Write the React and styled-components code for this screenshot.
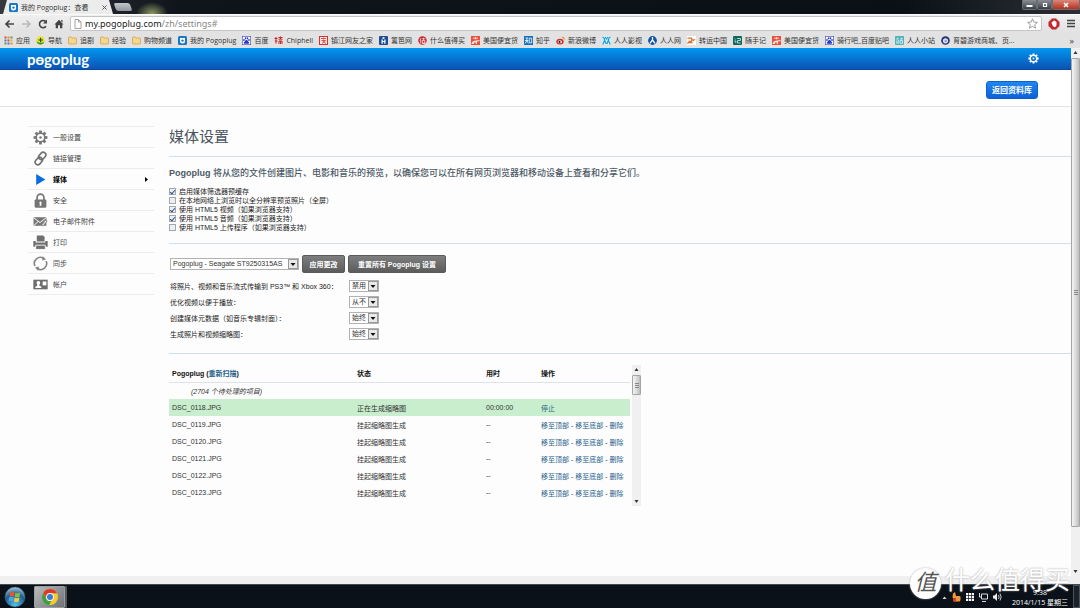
import React, { useState } from "react";
import styled, { createGlobalStyle } from "styled-components";

const GlobalStyle = createGlobalStyle`
  * {
    box-sizing: border-box;
  }
  body {
    margin: 0;
    overflow: hidden;
    font-family: "Liberation Sans", "Noto Sans CJK SC", sans-serif;
    font-size: 7px;
    color: #333;
    background: #fff;
  }
  button, input, select {
    font-family: inherit;
    margin: 0;
  }
  a {
    text-decoration: none;
  }
  svg {
    display: block;
    flex-shrink: 0;
  }
`;

const Screen = styled.div`
  display: flex;
  flex-direction: column;
  height: 100vh;
`;

/* ---------- browser ---------- */

const TitleBar = styled.header`
  display: flex;
  justify-content: space-between;
  height: 14px;
  flex-shrink: 0;
  background: radial-gradient(ellipse 16px 12px at 152px 14px, #8f9a62, transparent),
    linear-gradient(90deg, #35383c 0, #10151c 180px, #0b1017 900px, #2b2f35);
`;

const TabStrip = styled.div`
  display: flex;
  align-items: flex-end;
  padding-left: 3px;
`;

const Tab = styled.div`
  display: flex;
  align-items: center;
  gap: 3px;
  width: 110px;
  height: 14px;
  padding: 0 6px;
  font-family: "Open Sans", "Noto Sans CJK SC", sans-serif;
  color: #333;
  background: #ececec;
  clip-path: polygon(4px 0, 106px 0, 100% 100%, 0 100%);

  span {
    flex: 1;
    white-space: nowrap;
  }
`;

const NewTab = styled.button`
  width: 16px;
  height: 8px;
  margin: 0 0 3px 2px;
  padding: 0;
  border: 0;
  border-radius: 2px;
  background: linear-gradient(#c3c7cb, #8f959c);
  transform: skewX(20deg);
`;

const WindowButtons = styled.div`
  display: flex;
  align-items: flex-start;
`;

const WindowButton = styled.button`
  display: flex;
  align-items: center;
  justify-content: center;
  width: ${(p) => (p.$close ? "28px" : "15px")};
  height: 10px;
  padding: 0;
  border: 1px solid #6b6f74;
  border-top: 0;
  border-radius: 0 0 2px 2px;
  background: ${(p) =>
    p.$close
      ? "linear-gradient(#d9877a, #b8301c)"
      : "linear-gradient(#8b8f95, #3a3f46)"};
`;

const Toolbar = styled.div`
  display: flex;
  align-items: center;
  gap: 6px;
  height: 18px;
  flex-shrink: 0;
  padding: 0 4px;
  border-top: 1px solid #fafafa;
  background: linear-gradient(#efefef, #e2e2e2);
`;

const IconButton = styled.button`
  display: flex;
  padding: 0;
  border: 0;
  background: none;
`;

const AddressBar = styled.div`
  display: flex;
  align-items: center;
  flex: 1;
  gap: 3px;
  height: 15px;
  padding: 0 3px;
  border: 1px solid #c4c4c4;
  border-radius: 2px;
  background: #fff;
  font-family: "Noto Sans", "Open Sans", sans-serif;
  font-size: 9px;
  color: #222;

  p {
    flex: 1;
    margin: 0;
  }
  span {
    color: #888;
  }
`;

const Bookmarks = styled.nav`
  display: flex;
  align-items: center;
  gap: 6px;
  height: 16px;
  flex-shrink: 0;
  padding: 0 6px 0 4px;
  background: #e2e2e2;
  font-family: "Open Sans", "Noto Sans CJK SC", sans-serif;
`;

const Bookmark = styled.a`
  display: flex;
  align-items: center;
  gap: 3px;
  color: #333;
  white-space: nowrap;
`;

const MoreBookmarks = styled.button`
  margin-left: auto;
  padding: 0;
  border: 0;
  background: none;
  font-size: 9px;
  color: #444;
`;

/* ---------- scroll bars ---------- */

const Scroll = styled.div`
  display: flex;
  flex-direction: column;
  align-items: center;
  width: 9px;
  flex-shrink: 0;
  background: #f0f0f0;
  padding: 3px 0;
  gap: 4px;
`;

const Track = styled.div`
  flex: 1;
  align-self: stretch;
`;

const Thumb = styled.div`
  display: flex;
  align-items: center;
  justify-content: center;
  height: ${(p) => p.$size};
  border: 1px solid #a5a5a5;
  border-radius: 1px;
  background: linear-gradient(90deg, #f4f4f4, #dcdcdc 50%, #bdbdbd);
`;

/* ---------- page ---------- */

const Viewport = styled.div`
  display: flex;
  flex: 1;
  min-height: 0;
`;

const Page = styled.div`
  display: flex;
  flex-direction: column;
  flex: 1;
  background: #fdfdfd;
`;

const Brand = styled.div`
  display: flex;
  align-items: center;
  justify-content: space-between;
  height: 22px;
  padding: 0 32px 0 27px;
  border-bottom: 1px solid #0a4a9c;
  background: linear-gradient(#0296f0, #0b53b4);
`;

const Logo = styled.a`
  position: relative;
  display: block;
  color: #fff;
  font-family: Lato, sans-serif;
  font-weight: 700;
  font-size: 15px;
  line-height: 20px;
`;

const LogoMark = styled.svg`
  position: absolute;
  left: 11px;
  top: 10px;
`;

const ActionBar = styled.div`
  display: flex;
  align-items: center;
  justify-content: flex-end;
  height: 37px;
  padding: 0 33px;
  border-bottom: 1px solid #e4e4e4;
  background: #fff;
`;

const BlueButton = styled.button`
  height: 18px;
  width: 52px;
  margin-top: 3px;
  padding: 0;
  border: 1px solid #0b62cf;
  border-radius: 3px;
  background: linear-gradient(#2086ee, #0c62d6);
  color: #fff;
  font-weight: 700;
  font-size: 8px;
`;

const Columns = styled.div`
  display: flex;
  flex: 1;
  gap: 15px;
  padding: 19px 0 0 28px;
`;

const Menu = styled.nav`
  width: 126px;
  flex-shrink: 0;
  border-top: 1px solid #ececec;
`;

const MenuItem = styled.a`
  display: flex;
  align-items: center;
  gap: 5px;
  height: 21px;
  padding: 0 6px 0 5px;
  border-bottom: 1px solid #ececec;
  color: ${(p) => (p.$active ? "#000" : "#444")};
  font-weight: ${(p) => (p.$active ? 700 : 400)};

  span {
    flex: 1;
  }
`;

const Main = styled.main`
  flex: 1;
  min-width: 0;
`;

const Title = styled.h1`
  margin: 1px 0 9px;
  font-weight: 400;
  font-size: 15px;
  line-height: 20px;
  color: #4a5560;
`;

const Section = styled.section`
  padding: 11px 0;
  border-top: 1px solid #cfdfec;
`;

const Intro = styled.p`
  margin: 0 0 8px;
  font-size: 9px;
  line-height: 11px;
  font-weight: 500;
  color: #4c5966;

  b {
    font-weight: 700;
  }
`;

const CheckRow = styled.label`
  display: flex;
  align-items: center;
  gap: 3px;
  height: 9px;
  line-height: 9px;
  color: #222;
`;

const CheckBox = styled.input`
  appearance: none;
  width: 7px;
  height: 7px;
  border: 1px solid #a3a8ae;
  background: #eceff2;

  &:checked::after {
    content: "";
    display: block;
    width: 2px;
    height: 4px;
    margin: 0 0 0 1px;
    border: solid #2f4f8f;
    border-width: 0 1px 1px 0;
    transform: rotate(40deg);
  }
`;

const Controls = styled.div`
  display: flex;
  align-items: center;
  gap: 3px;
  margin-bottom: 5px;
  padding-left: 1px;
`;

const SelectBox = styled.div`
  position: relative;
  width: ${(p) => p.$width};
  height: 12px;
`;

const Select = styled.select`
  appearance: none;
  display: block;
  width: 100%;
  height: 12px;
  padding: 0 0 0 2px;
  border: 1px solid #b2b2b2;
  border-radius: 0;
  background: #fff;
  color: #333;
  font-size: 7px;
  line-height: 10px;
`;

const SelectArrow = styled.svg`
  position: absolute;
  right: 1px;
  top: 1px;
  pointer-events: none;
`;

const GreyButton = styled.button`
  height: 18px;
  width: ${(p) => p.$width};
  padding: 0;
  border: 1px solid #5a5a5a;
  border-radius: 2px;
  background: linear-gradient(#7e7e7e, #5c5c5c);
  color: #fff;
  font-weight: 700;
  font-size: 7px;
  white-space: nowrap;
`;

const OptionRow = styled.div`
  display: grid;
  grid-template-columns: 179px 30px;
  align-items: center;
  height: 16px;
  padding-left: 1px;
  color: #222;
`;

const QueueBox = styled.div`
  display: flex;
  gap: 2px;
  width: 472px;
  height: 141px;
`;

const Queue = styled.table`
  flex: 1;
  align-self: flex-start;
  table-layout: fixed;
  border-collapse: collapse;

  th,
  td {
    height: 17px;
    padding: 0 0 0 3px;
    text-align: left;
    white-space: nowrap;
    color: #333;
  }
  th {
    border-bottom: 1px solid #dde3e8;
    color: #111;
  }
  th:nth-child(1) {
    width: 185px;
  }
  th:nth-child(2) {
    width: 129px;
  }
  th:nth-child(3) {
    width: 55px;
  }
  a {
    color: #1d5f8c;
  }
`;

const QueueRow = styled.tr`
  background: ${(p) => (p.$running ? "#c8eecd" : "none")};
`;

const PendingCell = styled.td`
  && {
    padding-left: 22px;
    font-style: italic;
  }
`;

const BottomEdge = styled.div`
  height: 8px;
  flex-shrink: 0;
  background: #f0f0f0;
`;

/* ---------- desktop ---------- */

const Taskbar = styled.footer`
  position: relative;
  display: flex;
  align-items: stretch;
  height: 24px;
  flex-shrink: 0;
  padding-left: 4px;
  border-top: 1px solid #444b50;
  background: #0b1118;
  color: #fff;
`;

const StartButton = styled.button`
  display: flex;
  align-items: center;
  margin-right: 8px;
  padding: 0;
  border: 0;
  background: none;
`;

const TaskButton = styled.button`
  display: flex;
  align-items: center;
  justify-content: center;
  width: 31px;
  margin-top: 1px;
  padding: 0;
  border: 1px solid #9a9da0;
  border-radius: 1px;
  background: linear-gradient(135deg, #b9bbbd, #6e7276);
  box-shadow: 2px 0 0 #55595d;
`;

const Tray = styled.div`
  display: flex;
  align-items: center;
  gap: 5px;
  margin-left: auto;
`;

const Clock = styled.div`
  width: 66px;
  padding-top: 2px;
  font-family: "Open Sans", "Noto Sans CJK SC", sans-serif;
  line-height: 10px;
  text-align: center;
  white-space: nowrap;
`;

const ShowDesktop = styled.button`
  width: 7px;
  padding: 0;
  border: 1px solid #4c5259;
  background: #1b2129;
`;

const Watermark = styled.div`
  position: absolute;
  right: 10px;
  bottom: 16px;
  display: flex;
  align-items: center;
  gap: 4px;
  color: #fff;
  font-size: 25px;
  line-height: 24px;
  white-space: nowrap;
  text-shadow: 0 0 2px #999;
`;

const WatermarkSeal = styled.span`
  width: 31px;
  height: 31px;
  margin-bottom: -7px;
  border-radius: 50%;
  background: #fff;
  box-shadow: 0 0 2px #aaa;
  color: #555;
  font-size: 22px;
  font-style: italic;
  line-height: 30px;
  text-align: center;
  text-shadow: none;
`;

/* ---------- icons ---------- */

const glyphs = {
  apps: (
    <g>
      {["#d94b3d", "#e58b2c", "#4d9e4f", "#3f77d1", "#d94b3d", "#e0b52e", "#4d9e4f", "#3f77d1", "#e58b2c"].map(
        (c, i) => (
          <rect key={i} x={(i % 3) * 3 + 0.5} y={Math.floor(i / 3) * 3 + 0.5} width="2" height="2" fill={c} />
        )
      )}
    </g>
  ),
  hao: (
    <g>
      <circle cx="4.5" cy="4.5" r="4.2" fill="#ece02c" />
      <path d="M0.500 5.500a4.200 4.200 0 0 0 8 0Q6 8 0.500 5.500Z" fill="#2e9b3c" />
      <path d="M4 1.800h1.200v1.600H7v1.200H5.200v1.600H4V4.600H2.300V3.400H4Z" fill="#1d5c2a" />
    </g>
  ),
  folder: (
    <path d="M0.5 2q0-1 1-1h2l1 1h3.500q0.500 0 0.500 0.500v5q0 0.500-0.500 0.500h-7q-0.500 0-0.500-0.500Z" fill="#f8d68c" stroke="#c89b45" strokeWidth="0.7" />
  ),
  pogo: (
    <g>
      <rect width="9" height="9" rx="1.5" fill="#1878c8" />
      <path d="M2 2h5v3a2.500 2.500 0 0 1-5 0Z" fill="#fff" />
      <circle cx="4.5" cy="4.6" r="1.2" fill="#1878c8" />
    </g>
  ),
  paw: (
    <g>
      <rect x="0.3" y="0.3" width="8.400" height="8.400" fill="#fff" stroke="#3443b8" strokeWidth="0.6" />
      <g fill="#2636c4">
        <ellipse cx="2" cy="4" rx="0.8" ry="1.100" />
        <ellipse cx="3.6" cy="2.300" rx="0.8" ry="1.100" />
        <ellipse cx="5.500" cy="2.300" rx="0.8" ry="1.100" />
        <ellipse cx="7" cy="4" rx="0.8" ry="1.100" />
        <path d="M4.500 4q1 0 1.500 1t1.200 1.500q0 1.500-1.500 1.300h-2.500q-1.500 0.200-1.500-1.300Q2.500 6 3 5t1.500-1Z" />
      </g>
    </g>
  ),
  chip: (
    <path d="M0.500 2.500h3M2 1v6.500M0.800 5h2.600M4.500 1.500h4M4.500 3.200h4M5 5v3M8 5v3M5 5h3M6.500 5v3M6.500 0.500v2.500" stroke="#c9252b" fill="none" />
  ),
  town: (
    <g>
      <rect x="0.500" y="0.500" width="8" height="8" fill="#fbe9e7" stroke="#d3322d" />
      <path d="M2 2.500h5M4.500 1.500v2M2.500 4.500h4L3 7.500M3.500 5l3.500 2.500" stroke="#d3322d" fill="none" strokeWidth="0.8" />
    </g>
  ),
  liba: (
    <g>
      <rect width="9" height="9" rx="1" fill="#1d4d96" />
      <rect x="3.500" y="1.200" width="2" height="1.600" fill="#fff" />
      <path d="M2.500 3.600h1.300v1.300h1.500V3.600h1.200v4.200H5.300V6H3.800v1.800H2.500Z" fill="#fff" />
    </g>
  ),
  smzdm: (
    <g>
      <circle cx="4.500" cy="4.500" r="4.200" fill="#c8242f" />
      <path d="M3 2 2 4.500M2.700 4v3.500M4 2.800h3.300M5.500 1.800v2M4.300 4.500h2.500v2.500H4.300ZM4 7.500h3.500" stroke="#fff" strokeWidth="0.7" fill="none" />
    </g>
  ),
  cheap: (
    <g>
      <rect width="9" height="9" fill="#e8503f" />
      <path d="M2 2.200h5M4.500 1v2.400" stroke="#fbe3dc" strokeWidth="0.900" />
      <path d="M0.500 8q0.500-3 3-3.200L8.500 4v1.200L6 5.500V8H4.800V6.500H3V8Z" fill="#fbe3dc" />
    </g>
  ),
  zhihu: (
    <g>
      <rect width="9" height="9" fill="#1670bd" />
      <path d="M1.500 2h2.800M1 4.500h3.500M2.900 2v2.500L1.200 7.500M3 5l1.300 2.300M5.300 2.200h2.400v4.600H5.300Z" stroke="#fff" strokeWidth="0.8" fill="none" />
    </g>
  ),
  weibo: (
    <g>
      <ellipse cx="4" cy="5.600" rx="3.700" ry="2.900" fill="#d52c2f" />
      <ellipse cx="3.800" cy="5.800" rx="2.100" ry="1.500" fill="#fff" />
      <circle cx="3.500" cy="5.900" r="1.100" fill="#222" />
      <path d="M5.800 1.300q2.500-0.300 2.400 2.500" stroke="#eb9a2c" strokeWidth="1.200" fill="none" />
    </g>
  ),
  yyets: (
    <g>
      <rect width="9" height="9" fill="#d5f0fb" />
      <path d="M0.500 1q2.500 1 2 3.500L0.800 8.500M2.700 4.500l1.500 3.500M8.500 1q-2.500 1-2 3.500l1.700 4M6.300 4.500 4.900 8M3 1l1.500 2L6 1" stroke="#1f9fd0" strokeWidth="1.200" fill="none" />
    </g>
  ),
  renren: (
    <g>
      <circle cx="4.500" cy="4.500" r="4.400" fill="#1256a3" />
      <path d="M4.500 1v3L2 7.300M4.500 4 7 7.300" stroke="#fff" strokeWidth="1.300" fill="none" />
    </g>
  ),
  ship: (
    <g>
      <rect width="9" height="9" fill="#fff" />
      <path d="M0.500 2.200h4l0.500 2L3 6.500h2.500M0.500 7.500 3 5" stroke="#e66a25" strokeWidth="1.300" fill="none" />
      <path d="M5 3.200h3.700L6 5.500Z" fill="#e66a25" />
    </g>
  ),
  sui: (
    <g>
      <rect width="9" height="9" rx="1" fill="#10675c" />
      <path d="M1.500 2.500l1 1M1.300 5h1.500v2M4 2.500h3.500v2H4.500V7h3" stroke="#d4efe9" strokeWidth="0.800" fill="none" />
    </g>
  ),
  station: (
    <g>
      <rect width="9" height="9" rx="1" fill="#4eb1b9" />
      <path d="M2.500 1.500v1M1.200 3h2.600M1.800 4.500v2M3.300 4v2.500M1 7h3M6 1.500v3M6 2.800h2M5 4.600h2.600v2.700H5Z" stroke="#fff" strokeWidth="0.700" fill="none" />
    </g>
  ),
  ubi: (
    <g>
      <circle cx="4.500" cy="4.500" r="4.300" fill="#28346f" />
      <circle cx="4.500" cy="4.800" r="2.600" fill="#dbe2f3" />
      <circle cx="4.700" cy="5" r="1.200" fill="#8d9aca" />
    </g>
  ),
};

const Glyph = ({ name }) => (
  <svg width="9" height="9" viewBox="0 0 9 9" aria-hidden="true">
    {glyphs[name]}
  </svg>
);

const gearTeeth = [0, 45, 90, 135, 180, 225, 270, 315];

const Gear = ({ size, color }) => (
  <svg width={size} height={size} viewBox="0 0 14 14" aria-hidden="true">
    {gearTeeth.map((a) => (
      <path key={a} d="M5.800 0.500h2.400l0.300 2.500h-3Z" fill={color} transform={`rotate(${a} 7 7)`} />
    ))}
    <circle cx="7" cy="7" r="4" fill="none" stroke={color} strokeWidth="1.500" />
    <circle cx="7" cy="7" r="1.200" fill={color} />
  </svg>
);

const menuIcons = {
  link: (
    <g fill="none" stroke="#707070" strokeWidth="1.500">
      <rect x="6.100" y="0.800" width="5" height="7.600" rx="2.500" transform="rotate(42 8.600 4.600)" />
      <rect x="2.900" y="5.600" width="5" height="7.600" rx="2.500" transform="rotate(42 5.400 9.400)" />
    </g>
  ),
  media: <path d="M3 1.800v10.400L11.500 7Z" fill="#0b6be0" />,
  lock: (
    <g>
      <path d="M3.800 6.500V4.300a3.200 3.200 0 0 1 6.400 0v2.200" fill="none" stroke="#777" strokeWidth="1.600" />
      <rect x="1.500" y="6" width="11" height="7.700" rx="1" fill="#757575" />
      <path d="M7 8a1.100 1.100 0 0 1 0.600 2l0.300 2H6.100l0.300-2A1.100 1.100 0 0 1 7 8Z" fill="#fff" />
    </g>
  ),
  mail: (
    <g>
      <path d="M0.500 3h12v8h-12Z" fill="#777" />
      <path d="M0.500 3.300 6.500 8l6-4.700M0.500 11 4.800 7" stroke="#fff" fill="none" strokeWidth="0.900" />
      <path d="m7.500 10 3.700-4q1.500-0.800 2 0.500L9.500 11q-1.300 0.500-1.600-0.500l3-3.300" fill="#fff" stroke="#777" strokeWidth="0.800" />
    </g>
  ),
  print: (
    <g fill="#6f6f6f">
      <path d="M3.500 0.500h6L10.800 2v4H3.500Z" />
      <path d="M0.300 5.500h2.200V7h9V5.500h2.200v5.500H0.300Z" />
      <path d="M2.500 9.500h9V13.500h-9Z" stroke="#fff" strokeWidth="0.800" />
    </g>
  ),
  sync: (
    <g fill="none" stroke="#858585" strokeWidth="1.500">
      <path d="M1.800 9.300A5.600 5.600 0 0 1 10 2.300" />
      <path d="M12.200 4.700A5.600 5.600 0 0 1 4 11.700" />
      <path d="M9.200 0.300l3 3-3.700 0.800ZM4.800 13.700l-3-3 3.700-0.800Z" fill="#858585" stroke="none" />
    </g>
  ),
  account: (
    <g>
      <rect x="0.300" y="2.500" width="13.400" height="9" fill="#6e6e6e" />
      <path d="M2 10.300q0-1.800 2-2.200V7q-0.800-0.800-0.600-2 .3-1.200 1.600-1.200T6.600 5q0.200 1.200-0.600 2v1.100q2 .4 2 2.200Z" fill="#fff" />
      <path d="M9 4.200h3.500v3.600H9Z" fill="#fff" />
    </g>
  ),
};

const MenuIcon = ({ name }) =>
  name === "gear" ? (
    <Gear size={15} color="#777" />
  ) : (
    <svg width="15" height="15" viewBox="0 0 14 14" aria-hidden="true">
      {menuIcons[name]}
    </svg>
  );

const Arrow = ({ down }) => (
  <svg width="5" height="3" viewBox="0 0 5 3" aria-hidden="true">
    <path d={down ? "M0.500 0h4L2.500 3Z" : "M0.500 3h4L2.500 0Z"} fill="#333" />
  </svg>
);

const Grip = () => (
  <svg width="4" height="5" viewBox="0 0 4 5" aria-hidden="true">
    <path d="M0 0.500h4M0 2.500h4M0 4.500h4" stroke="#888" />
  </svg>
);

const ScrollBar = ({ size }) => (
  <Scroll>
    <Arrow />
    <Track>
      <Thumb $size={size}>
        <Grip />
      </Thumb>
    </Track>
    <Arrow down />
  </Scroll>
);

/* ---------- data ---------- */

const bookmarks = [
  ["apps", "应用"],
  ["hao", "导航"],
  ["folder", "追剧"],
  ["folder", "经验"],
  ["folder", "购物频道"],
  ["pogo", "我的 Pogoplug"],
  ["paw", "百度"],
  ["chip", "Chiphell"],
  ["town", "镇江网友之家"],
  ["liba", "篱笆网"],
  ["smzdm", "什么值得买"],
  ["cheap", "美国便宜货"],
  ["zhihu", "知乎"],
  ["weibo", "新浪微博"],
  ["yyets", "人人影视"],
  ["renren", "人人网"],
  ["ship", "转运中国"],
  ["sui", "随手记"],
  ["cheap", "美国便宜货"],
  ["paw", "骑行吧_百度贴吧"],
  ["station", "人人小站"],
  ["ubi", "育碧游戏商城、页..."],
];

const menu = [
  ["gear", "一般设置"],
  ["link", "链接管理"],
  ["media", "媒体"],
  ["lock", "安全"],
  ["mail", "电子邮件附件"],
  ["print", "打印"],
  ["sync", "同步"],
  ["account", "帐户"],
];

const mediaChecks = [
  ["启用媒体筛选器预缓存", true],
  ["在本地网络上浏览时以全分辨率预览照片（全屏）", false],
  ["使用 HTML5 视频（如果浏览器支持）", true],
  ["使用 HTML5 音频（如果浏览器支持）", true],
  ["使用 HTML5 上传程序（如果浏览器支持）", false],
];

const options = [
  ["将照片、视频和音乐流式传输到 PS3™ 和 Xbox 360：", "禁用"],
  ["优化视频以便于播放：", "从不"],
  ["创建媒体元数据（如音乐专辑封面）：", "始终"],
  ["生成照片和视频缩略图：", "始终"],
];

const waiting = ["DSC_0119.JPG", "DSC_0120.JPG", "DSC_0121.JPG", "DSC_0122.JPG", "DSC_0123.JPG"];

const DropDown = ({ id, width, value, label }) => (
  <SelectBox $width={width}>
    <Select id={id} aria-label={label} defaultValue={value}>
      <option>{value}</option>
    </Select>
    <SelectArrow width="10" height="10" viewBox="0 0 10 10">
      <rect x="0.500" y="0.500" width="9" height="9" fill="#e9e9e9" stroke="#999" />
      <path d="M2.500 4h5L5 7Z" fill="#111" />
    </SelectArrow>
  </SelectBox>
);

const Browser = () => (
  <>
    <TitleBar>
      <TabStrip>
        <Tab>
          <Glyph name="pogo" />
          <span>我的 Pogoplug：查看</span>
          <svg width="5" height="5" viewBox="0 0 5 5">
            <path d="M0.500 0.500l4 4M4.500 0.500l-4 4" stroke="#555" />
          </svg>
        </Tab>
        <NewTab aria-label="新标签页" />
      </TabStrip>
      <WindowButtons>
        <WindowButton aria-label="最小化">
          <svg width="7" height="6" viewBox="0 0 7 6">
            <path d="M0.500 4h6" stroke="#fff" strokeWidth="2" />
          </svg>
        </WindowButton>
        <WindowButton aria-label="还原">
          <svg width="6" height="6" viewBox="0 0 6 6">
            <path d="M1.500 1.500h3v3h-3Z" stroke="#fff" strokeWidth="1.200" fill="none" />
          </svg>
        </WindowButton>
        <WindowButton $close aria-label="关闭">
          <svg width="6" height="6" viewBox="0 0 6 6">
            <path d="M1 1l4 4M5 1l-4 4" stroke="#fff" strokeWidth="1.500" />
          </svg>
        </WindowButton>
      </WindowButtons>
    </TitleBar>
    <Toolbar>
      <IconButton aria-label="后退">
        <svg width="11" height="10" viewBox="0 0 11 10">
          <path d="M10 5H2.500M5.500 1.500 2 5l3.500 3.500" stroke="#444" strokeWidth="1.700" fill="none" />
        </svg>
      </IconButton>
      <IconButton aria-label="前进">
        <svg width="11" height="10" viewBox="0 0 11 10">
          <path d="M1 5h7.500M5.500 1.500 9 5 5.500 8.500" stroke="#bbb" strokeWidth="1.700" fill="none" />
        </svg>
      </IconButton>
      <IconButton aria-label="刷新">
        <svg width="10" height="10" viewBox="0 0 10 10">
          <path d="M8 7.200A3.600 3.600 0 1 1 7.700 2.600" stroke="#444" strokeWidth="1.600" fill="none" />
          <path d="M9 0.500v4H5Z" fill="#444" />
        </svg>
      </IconButton>
      <IconButton aria-label="主页">
        <svg width="10" height="10" viewBox="0 0 10 10">
          <path d="M5 0.800 9.500 5.500H8.300V9.300H6V6.300H4v3H1.700V5.500H0.500ZM7.200 1h1.300v2.500L7.200 2.200Z" fill="#444" />
        </svg>
      </IconButton>
      <AddressBar>
        <svg width="8" height="10" viewBox="0 0 8 10">
          <path d="M1 0.500h3.500l2.500 2.500v6.500H1ZM4.500 0.500V3H7" fill="#fff" stroke="#999" strokeWidth="0.900" />
        </svg>
        <p>
          my.pogoplug.com<span>/zh/settings#</span>
        </p>
        <svg width="11" height="11" viewBox="0 0 11 11">
          <path d="m5.500 0.800 1.400 3.300 3.500 0.300-2.700 2.300 0.900 3.500-3.100-1.900-3.100 1.900 0.900-3.500L0.600 4.400l3.500-0.300Z" fill="#fff" stroke="#888" strokeWidth="0.800" />
        </svg>
      </AddressBar>
      <IconButton aria-label="AdBlock">
        <svg width="12" height="12" viewBox="0 0 12 12">
          <path d="M4 0.500h4L11.500 4v4L8 11.500H4L0.500 8V4Z" fill="#d0202a" stroke="#999" strokeWidth="0.500" />
          <path d="M3.700 5.500V4h1V3h1V2.500h1V3h1v1h0.800v3q0 2-2 2.200Q4.800 9 3.700 5.500Z" fill="#fff" />
        </svg>
      </IconButton>
      <IconButton aria-label="菜单">
        <svg width="10" height="9" viewBox="0 0 10 9">
          <path d="M1 1.500h8M1 4.500h8M1 7.500h8" stroke="#444" strokeWidth="1.600" />
        </svg>
      </IconButton>
    </Toolbar>
    <Bookmarks>
      {bookmarks.map(([icon, text], i) => (
        <Bookmark href="#" key={i}>
          <Glyph name={icon} />
          {text}
        </Bookmark>
      ))}
      <MoreBookmarks>»</MoreBookmarks>
    </Bookmarks>
  </>
);

const QueueTable = () => (
  <QueueBox>
    <Queue>
      <thead>
        <tr>
          <th>
            Pogoplug (<a href="#">重新扫描</a>)
          </th>
          <th>状态</th>
          <th>用时</th>
          <th>操作</th>
        </tr>
      </thead>
      <tbody>
        <tr>
          <PendingCell colSpan={4}>(2704 个待处理的项目)</PendingCell>
        </tr>
        <QueueRow $running>
          <td>DSC_0118.JPG</td>
          <td>正在生成缩略图</td>
          <td>00:00:00</td>
          <td>
            <a href="#">停止</a>
          </td>
        </QueueRow>
        {waiting.map((file) => (
          <QueueRow key={file}>
            <td>{file}</td>
            <td>挂起缩略图生成</td>
            <td>--</td>
            <td>
              <a href="#">移至顶部</a> - <a href="#">移至底部</a> - <a href="#">删除</a>
            </td>
          </QueueRow>
        ))}
      </tbody>
    </Queue>
    <ScrollBar size="20px" />
  </QueueBox>
);

const Settings = () => {
  const [checks, setChecks] = useState(mediaChecks.map((c) => c[1]));

  const handleCheck = (index) => {
    setChecks(checks.map((on, i) => (i === index ? !on : on)));
  };

  return (
    <Main>
      <Title>媒体设置</Title>
      <Section>
        <Intro>
          <b>Pogoplug</b> 将从您的文件创建图片、电影和音乐的预览，以确保您可以在所有网页浏览器和移动设备上查看和分享它们。
        </Intro>
        {mediaChecks.map(([text], i) => (
          <CheckRow key={text}>
            <CheckBox type="checkbox" checked={checks[i]} onChange={() => handleCheck(i)} />
            {text}
          </CheckRow>
        ))}
      </Section>
      <Section>
        <Controls>
          <DropDown width="129px" label="设备" value="Pogoplug - Seagate ST9250315AS" />
          <GreyButton $width="43px">应用更改</GreyButton>
          <GreyButton $width="98px">重置所有 Pogoplug 设置</GreyButton>
        </Controls>
        {options.map(([text, value], i) => (
          <OptionRow key={text}>
            <label htmlFor={`option-${i}`}>{text}</label>
            <DropDown id={`option-${i}`} width="30px" value={value} />
          </OptionRow>
        ))}
      </Section>
      <Section>
        <QueueTable />
      </Section>
    </Main>
  );
};

const Desktop = () => (
  <Taskbar>
    <StartButton aria-label="开始">
      <svg width="22" height="22" viewBox="0 0 22 22">
        <defs>
          <radialGradient id="orb" cx="0.5" cy="0.9" r="0.9">
            <stop offset="0" stopColor="#4fc4ea" />
            <stop offset="0.6" stopColor="#1d5c93" />
            <stop offset="1" stopColor="#a9c6da" />
          </radialGradient>
        </defs>
        <circle cx="11" cy="11" r="10" fill="url(#orb)" stroke="#42657f" strokeWidth="0.600" />
        <path d="M6 6.500q2.500-1.200 4.500 0l-0.600 4q-2-1-4.500 0Z" fill="#e8562a" />
        <path d="M11.300 6.800q2.300 1.100 4.900 0l-0.700 4q-2.500 1-4.800 0Z" fill="#86bf3b" />
        <path d="M5.200 11.300q2.500-1 4.500 0l-0.600 4q-2-1.100-4.500 0Z" fill="#4aa5e4" />
        <path d="M10.600 11.600q2.300 1.100 4.800 0l-0.600 4q-2.500 1-4.800 0Z" fill="#f8c83a" />
      </svg>
    </StartButton>
    <TaskButton aria-label="Chrome">
      <svg width="18" height="18" viewBox="0 0 18 18">
        <circle cx="9" cy="9" r="8" fill="#f6cd27" />
        <path d="M2.100 5A8 8 0 0 1 16 5.200H9a4 4 0 0 0-3.600 5.400Z" fill="#dc3b2c" />
        <path d="M2.100 5 5.500 10.900A4 4 0 0 0 10.500 12.800L8.200 17A8 8 0 0 1 2.100 5Z" fill="#38a047" />
        <circle cx="9" cy="9" r="3.900" fill="#f4f4f4" />
        <circle cx="9" cy="9" r="3" fill="#3c7ad6" />
      </svg>
    </TaskButton>
    <Tray>
      <svg width="5" height="23" viewBox="0 0 5 23">
        <path d="M0.500 14h4L2.500 11.500Z" fill="#ddd" />
      </svg>
      <svg width="9" height="23" viewBox="0 0 9 23">
        <path d="M1 8.500l2-1.500 1 4h3.500q1 0 1 1v3q0 1.500-2 1.500H2L0.500 12Z" fill="#eb9a35" />
        <path d="M1 13h3v3.500H1Z" fill="#cf3d24" />
      </svg>
      <svg width="8" height="23" viewBox="0 0 8 23">
        <path d="M0 8h8v8H0Z" fill="#fff" />
        <path d="M0 10.500h8M0 13.500h8M2.500 8v8M5.500 8v8" stroke="#0b1118" strokeWidth="0.700" />
      </svg>
      <svg width="9" height="23" viewBox="0 0 9 23">
        <path d="M2.500 9h6v5h-6ZM3 16.500h4M0.500 8v4h2" stroke="#ddd" fill="none" />
      </svg>
      <svg width="9" height="23" viewBox="0 0 9 23">
        <path d="M0 10.500h1.500L4 8v8l-2.500-2.500H0Z" fill="#eee" />
        <path d="M5.500 10q1.200 2 0 4M7 8.500q2.300 3.500 0 7" stroke="#ddd" fill="none" strokeWidth="0.900" />
      </svg>
      <Clock>
        9:38
        <br />
        2014/1/15 星期三
      </Clock>
    </Tray>
    <ShowDesktop aria-label="显示桌面" />
    <Watermark>
      <WatermarkSeal>值</WatermarkSeal>
      什么值得买
    </Watermark>
  </Taskbar>
);

const App = () => {
  return (
    <Screen>
      <GlobalStyle />
      <Browser />
      <Viewport>
        <Page>
          <Brand>
            <Logo href="#">
              pogoplug
              <LogoMark width="4" height="3" viewBox="0 0 4 3">
                <path d="M0 1.500h4" stroke="#fff" strokeWidth="1.200" />
              </LogoMark>
            </Logo>
            <IconButton aria-label="设置">
              <Gear size={11} color="#fff" />
            </IconButton>
          </Brand>
          <ActionBar>
            <BlueButton>返回资料库</BlueButton>
          </ActionBar>
          <Columns>
            <Menu>
              {menu.map(([icon, text]) => (
                <MenuItem href="#" key={icon} $active={icon === "media"}>
                  <MenuIcon name={icon} />
                  <span>{text}</span>
                  {icon === "media" && (
                    <svg width="3" height="5" viewBox="0 0 3 5">
                      <path d="M0 0v5l3-2.500Z" fill="#000" />
                    </svg>
                  )}
                </MenuItem>
              ))}
            </Menu>
            <Settings />
          </Columns>
        </Page>
        <ScrollBar size="469px" />
      </Viewport>
      <BottomEdge />
      <Desktop />
    </Screen>
  );
};

export default App;
